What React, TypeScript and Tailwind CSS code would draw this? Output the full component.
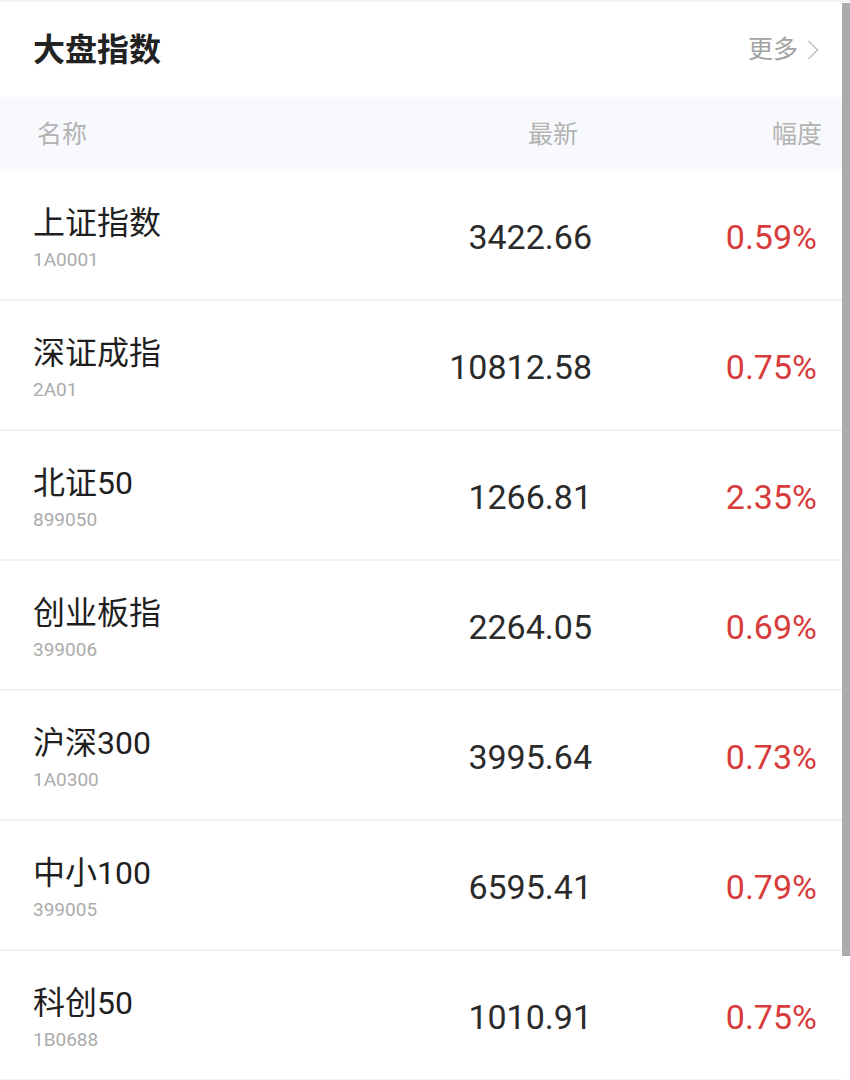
import React from 'react';

const rows = [
  { name: '上证指数', code: '1A0001', price: '3422.66', pct: '0.59%' },
  { name: '深证成指', code: '2A01', price: '10812.58', pct: '0.75%' },
  { name: '北证50', code: '899050', price: '1266.81', pct: '2.35%' },
  { name: '创业板指', code: '399006', price: '2264.05', pct: '0.69%' },
  { name: '沪深300', code: '1A0300', price: '3995.64', pct: '0.73%' },
  { name: '中小100', code: '399005', price: '6595.41', pct: '0.79%' },
  { name: '科创50', code: '1B0688', price: '1010.91', pct: '0.75%' },
];

const font = "font-['Roboto','Noto_Sans_CJK_SC',sans-serif]";

const App = () => {
  return (
    <div className={`w-[850px] h-[1080px] overflow-hidden bg-white ${font}`}>
      <div className="h-[2px] bg-[#f3f3f3]" />
      <div className="flex">
        <div className="w-[842px]">
          {/* title */}
          <div className="h-[95px] flex items-center justify-between pl-[33px] pr-[23px]">
            <h1 className="text-[32px] font-bold text-[#222] leading-none">大盘指数</h1>
            <div className="flex items-center gap-[9px] text-[#a3a3a3]">
              <span className="text-[25px] leading-none">更多</span>
              <svg width="12" height="20" viewBox="0 0 12 20" fill="none">
                <path d="M1.5 1 L10.5 10 L1.5 19" stroke="#c2c2c2" strokeWidth="1.5" />
              </svg>
            </div>
          </div>
          {/* table header */}
          <div className="h-[74px] bg-[#f8f9fc] flex items-center text-[25px] text-[#b3b3b3] leading-none">
            <div className="flex-1 pl-[37px]">名称</div>
            <div className="w-[200px] text-right pr-[20px]">最新</div>
            <div className="w-[244px] text-right pr-[20px]">幅度</div>
          </div>
          {rows.map((r) => (
            <div key={r.name} className="h-[130px] border-b-2 border-[#f1f1f1] flex items-center">
              <div className="flex-1 pl-[33px] flex flex-col pt-[5px]">
                <span className="text-[32px] leading-[38px] text-[#1f1f1f]">{r.name}</span>
                <span className="text-[19px] leading-[22px] text-[#ababab] mt-[7px]">{r.code}</span>
              </div>
              <div className="w-[200px] text-right text-[34px] leading-none text-[#2b2b2b] pr-[6px] pt-[3px]">
                {r.price}
              </div>
              <div className="w-[244px] text-right pr-[25px] text-[34px] leading-none text-[#d83b3b] pt-[3px]">
                {r.pct}
              </div>
            </div>
          ))}
        </div>
        <div className="w-[8px] pt-[1px]">
          <div className="h-[953px] bg-[#ababab]" />
        </div>
      </div>
    </div>
  );
};

export default App;
